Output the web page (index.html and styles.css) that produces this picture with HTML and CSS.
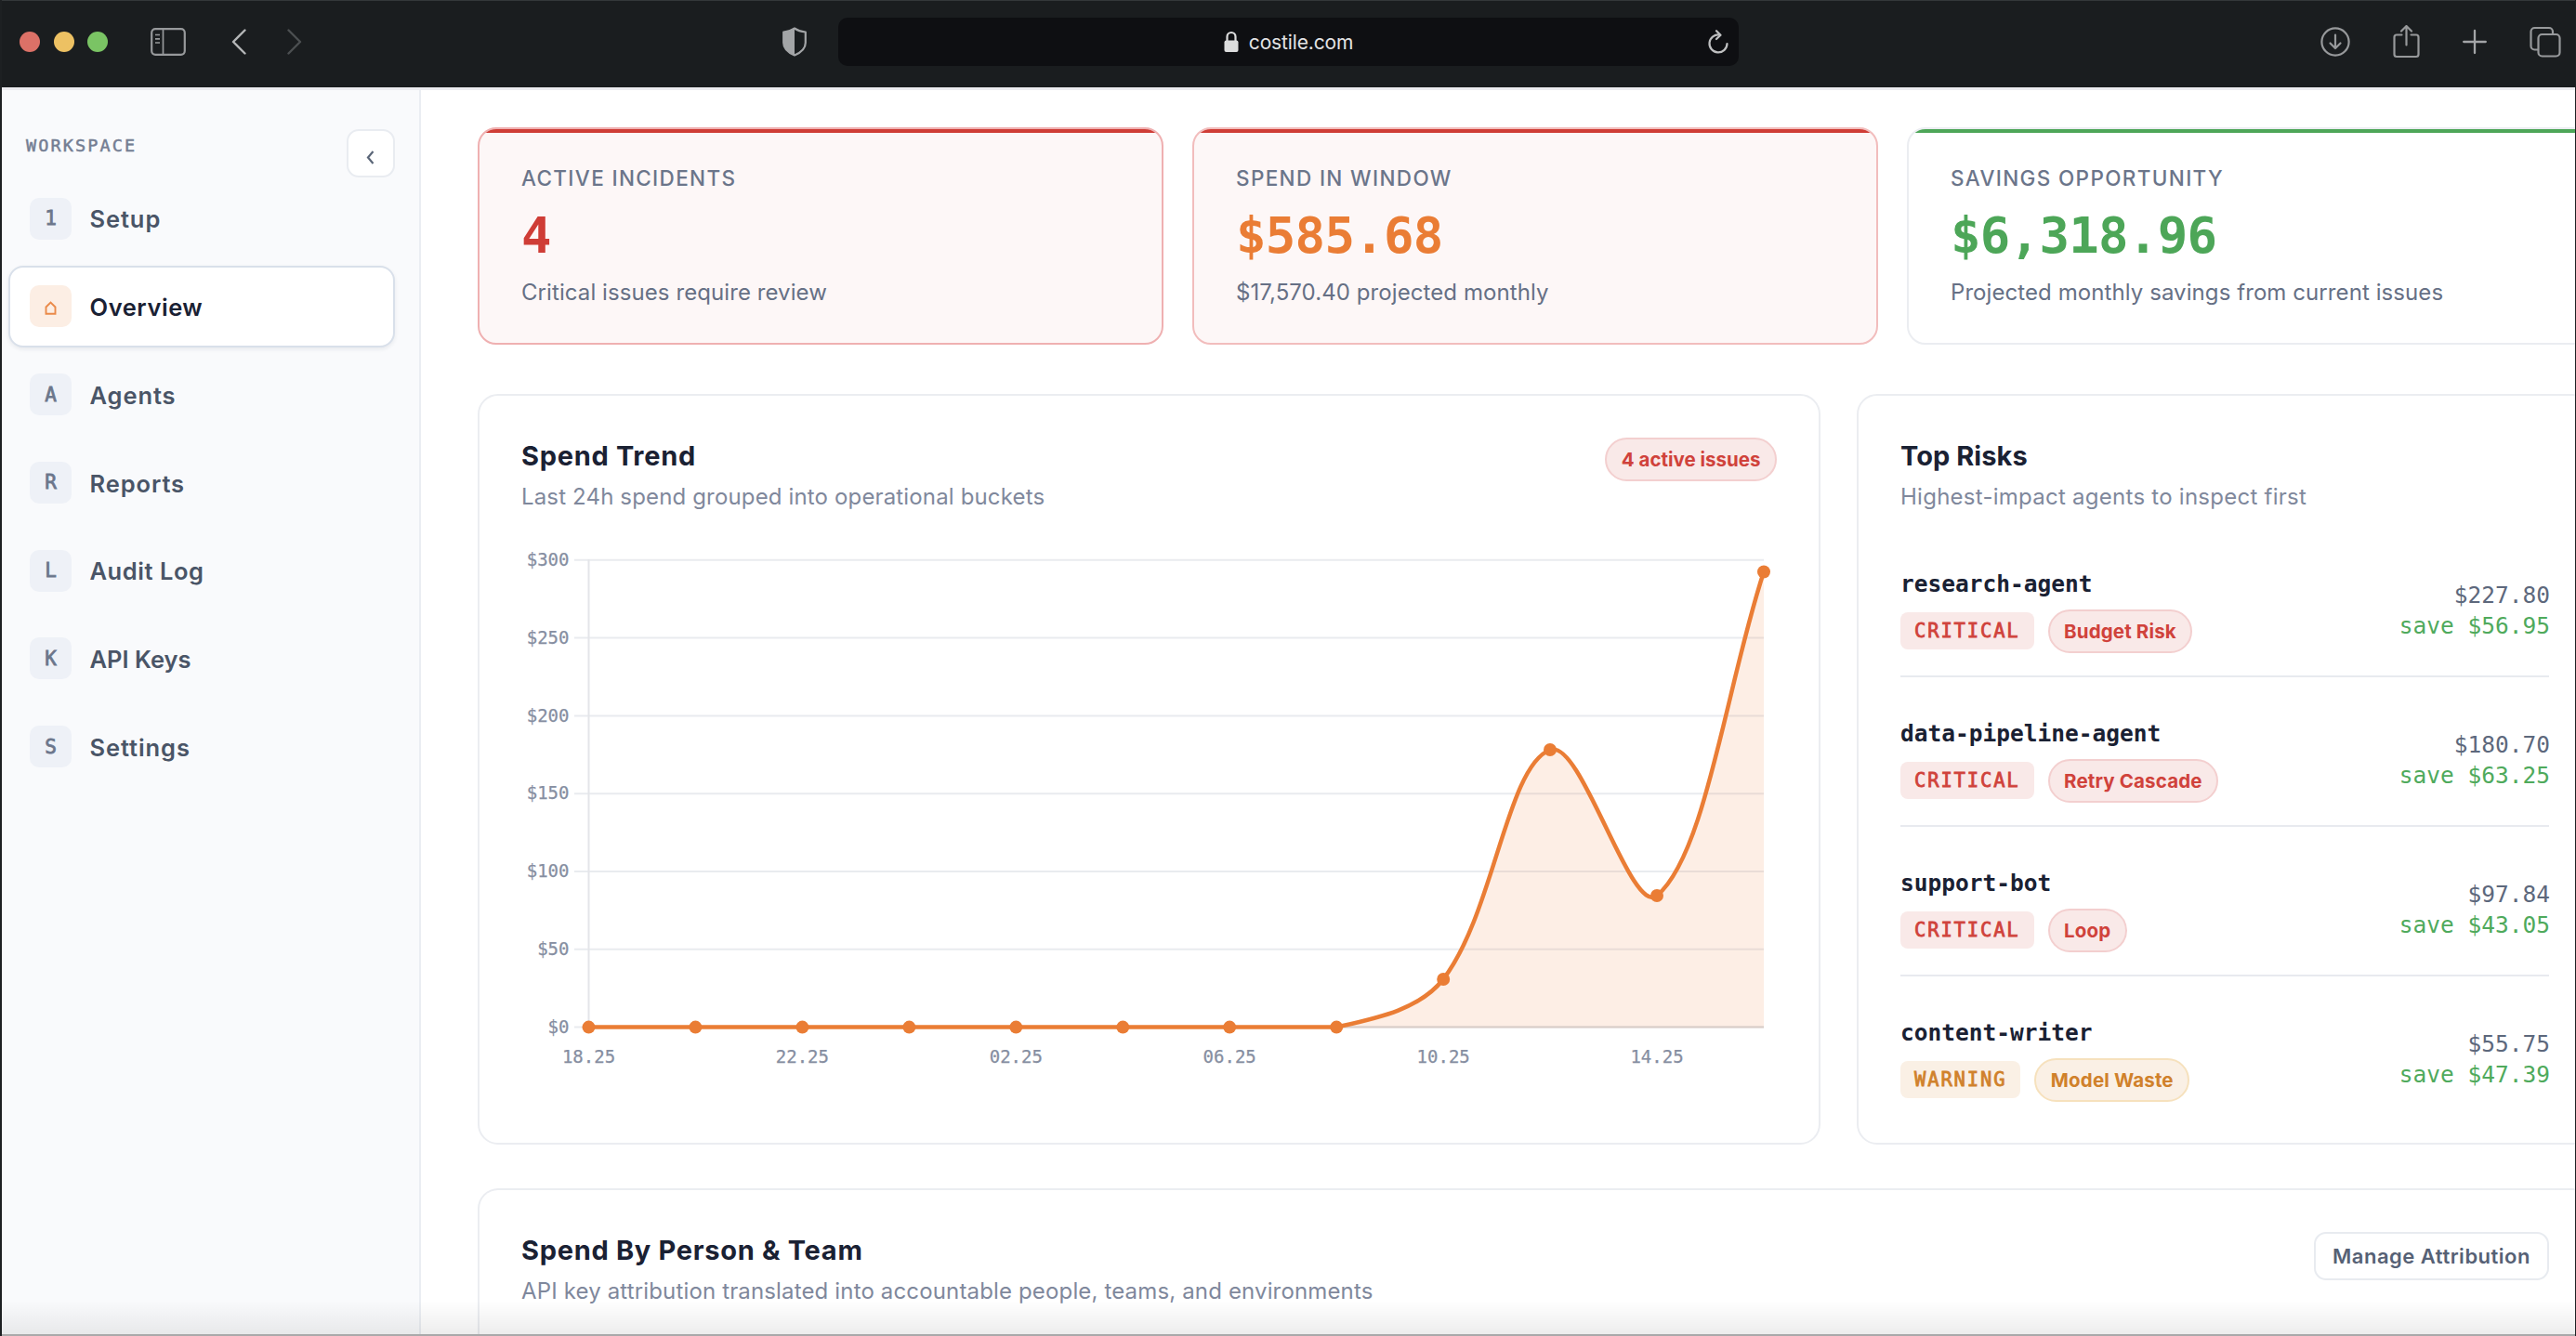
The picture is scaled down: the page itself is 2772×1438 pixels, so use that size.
FILE: index.html
```html
<!DOCTYPE html>
<html lang="en">
<head>
<meta charset="utf-8">
<title>Costile</title>
<link rel="stylesheet" href="styles.css">
</head>
<body>
<div class="window">
  <header class="toolbar">
    <div class="toolbar-left">
      <div class="lights"><i class="light red"></i><i class="light yellow"></i><i class="light green"></i></div>
      <svg class="ico-sidebar" width="38" height="30" viewBox="0 0 38 30" fill="none" stroke="#97999b" stroke-width="2.2"><rect x="1.2" y="1.2" width="35.6" height="27.6" rx="4"/><path d="M13.5 1v28M5 7.500h5M5 11.800h5M5 16h5" stroke-width="1.700"/></svg>
      <svg class="ico-back" width="16" height="28" viewBox="0 0 16 28" fill="none" stroke="#b4b6b7" stroke-width="2.400" stroke-linecap="round" stroke-linejoin="round"><path d="M14.500 1.500 2 14l12.500 12.500"/></svg>
      <svg class="ico-forward" width="16" height="28" viewBox="0 0 16 28" fill="none" stroke="#4c4f51" stroke-width="2.400" stroke-linecap="round" stroke-linejoin="round"><path d="M1.500 1.500 14 14 1.500 26.500"/></svg>
    </div>
    <svg class="ico-shield" width="28" height="32" viewBox="0 0 28 32"><path d="M14 1.500C10.500 4 6.500 5 2.200 5.500V17c0 7 6 11 11.800 13.500C19.800 28 25.800 24 25.800 17V5.500C21.500 5 17.500 4 14 1.500Z" fill="none" stroke="#a3a5a7" stroke-width="2.200" stroke-linejoin="round"/><path d="M14 1.500C10.500 4 6.500 5 2.200 5.500V17c0 7 6 11 11.800 13.500Z" fill="#a3a5a7"/></svg>
    <div class="address">
      <div class="address-text">
        <svg width="16" height="24" viewBox="0 0 16 24"><rect x="0.500" y="10.500" width="15" height="12.500" rx="2" fill="#dcdddd"/><path d="M3.500 11V6.500a4.500 4.500 0 0 1 9 0V11" fill="none" stroke="#dcdddd" stroke-width="2.200"/></svg>
        <span class="url">costile.com</span>
      </div>
      <svg class="ico-reload" width="24" height="26" viewBox="0 0 24 26" fill="none" stroke="#bfc0c1" stroke-width="2.200" stroke-linecap="round" stroke-linejoin="round"><path d="M13.500 5.500A9.500 9.500 0 1 0 21.500 15"/><path d="M10 1.200l4.500 4.500L10 10"/></svg>
    </div>
    <div class="toolbar-right">
      <svg width="32" height="36" viewBox="0 0 32 36" fill="none" stroke="#97999b" stroke-width="2.200" stroke-linecap="round" stroke-linejoin="round"><circle cx="16" cy="18" r="14.600"/><path d="M16 10.500v14M10.500 19.500l5.500 5.500 5.500-5.500"/></svg>
      <svg width="29" height="36" viewBox="0 0 29 36" fill="none" stroke="#97999b" stroke-width="2.200" stroke-linecap="round" stroke-linejoin="round"><path d="M9.500 10.500H4a2.500 2.500 0 0 0-2.500 2.500v18.500A2.500 2.500 0 0 0 4 34h21a2.500 2.500 0 0 0 2.500-2.500V13a2.500 2.500 0 0 0-2.500-2.500h-5.500M14.500 21.500V1.500M9 6.500l5.500-5.500L20 6.500"/></svg>
      <svg width="26" height="36" viewBox="0 0 26 36" fill="none" stroke="#a3a5a7" stroke-width="2.300" stroke-linecap="round"><path d="M13 6v24M1.200 18h23.600"/></svg>
      <svg width="34" height="36" viewBox="0 0 34 36" fill="none" stroke="#97999b" stroke-width="2.200" stroke-linejoin="round"><rect x="9.500" y="10" width="23" height="23.500" rx="4"/><path d="M9.500 26.500H5.500a4 4 0 0 1-4-4V7a4 4 0 0 1 4-4H21a4 4 0 0 1 4 4v3"/></svg>
    </div>
  </header>
  <div class="app">
    <aside class="sidebar">
      <div class="side-head"><span class="side-title">WORKSPACE</span><button class="collapse"><svg width="9" height="15" viewBox="0 0 9 15" fill="none" stroke="#5b6678" stroke-width="2.200"><path d="M7.500 1 2 7.500 7.500 14"/></svg></button></div>
      <nav class="nav">
        <a class="nav-item"><span class="nav-icon">1</span><span class="nav-label loose">Setup</span></a>
        <a class="nav-item active"><span class="nav-icon"><svg width="13" height="15" viewBox="0 0 13 15" fill="none" stroke="#ea8a4a" stroke-width="1.900"><path d="M1.500 13.800V6.500l5-5 5 5v7.300Z"/></svg></span><span class="nav-label">Overview</span></a>
        <a class="nav-item"><span class="nav-icon">A</span><span class="nav-label loose">Agents</span></a>
        <a class="nav-item"><span class="nav-icon">R</span><span class="nav-label loose">Reports</span></a>
        <a class="nav-item"><span class="nav-icon">L</span><span class="nav-label">Audit Log</span></a>
        <a class="nav-item"><span class="nav-icon">K</span><span class="nav-label snug">API Keys</span></a>
        <a class="nav-item"><span class="nav-icon">S</span><span class="nav-label loose">Settings</span></a>
      </nav>
    </aside>
    <main class="main">
      <section class="stats">
        <article class="stat stat-danger"><div class="stat-label">ACTIVE INCIDENTS</div><div class="stat-value">4</div><div class="stat-note">Critical issues require review</div></article>
        <article class="stat stat-warn"><div class="stat-label">SPEND IN WINDOW</div><div class="stat-value">$585.68</div><div class="stat-note">$17,570.40 projected monthly</div></article>
        <article class="stat stat-good"><div class="stat-label">SAVINGS OPPORTUNITY</div><div class="stat-value">$6,318.96</div><div class="stat-note">Projected monthly savings from current issues</div></article>
      </section>
      <section class="panels">
        <article class="panel">
          <div class="panel-head">
            <div><h2>Spend Trend</h2><p>Last 24h spend grouped into operational buckets</p></div>
            <span class="pill pill-red">4 active issues</span>
          </div>
          <svg class="chart" width="1350" height="620" viewBox="561 552 1350 620">
            <g stroke="#e9ebef" stroke-width="2"><path d="M618 602.800H1898M618 686.600H1898M618 770.400H1898M618 854.200H1898M618 938H1898M618 1021.800H1898M618 1105.600H1898"/><path d="M633.500 602V1106" stroke="#e4e5e9"/></g>
            <path d="M1438 1105.600C1480 1096.200 1527.500 1087 1553 1054C1608 982.500 1621 825.400 1668 807C1701.500 793.900 1755 987.200 1783 964C1835.600 920.200 1857.800 737.500 1898 615.500V1105.600Z" fill="#ec7d33" fill-opacity=".13"/>
            <path d="M1438 1105.600H1898" stroke="#d9cdc7" stroke-width="2"/>
            <path d="M633.500 1105.600H1438C1480 1096.200 1527.500 1087 1553 1054C1608 982.500 1621 825.400 1668 807C1701.500 793.900 1755 987.200 1783 964C1835.600 920.200 1857.800 737.500 1898 615.500" fill="none" stroke="#ea7d35" stroke-width="4.500" stroke-linejoin="round"/>
            <g fill="#ea7d35"><circle cx="633.500" cy="1105.600" r="7"/><circle cx="748.400" cy="1105.600" r="7"/><circle cx="863.400" cy="1105.600" r="7"/><circle cx="978.400" cy="1105.600" r="7"/><circle cx="1093.300" cy="1105.600" r="7"/><circle cx="1208.300" cy="1105.600" r="7"/><circle cx="1323.200" cy="1105.600" r="7"/><circle cx="1438.200" cy="1105.600" r="7"/><circle cx="1553.200" cy="1054" r="7"/><circle cx="1668" cy="807" r="7"/><circle cx="1783" cy="964" r="7"/><circle cx="1898" cy="615.500" r="7"/></g>
            <g class="axis" text-anchor="end"><text x="612.500" y="609">$300</text><text x="612.500" y="692.800">$250</text><text x="612.500" y="776.600">$200</text><text x="612.500" y="860.400">$150</text><text x="612.500" y="944.200">$100</text><text x="612.500" y="1028">$50</text><text x="612.500" y="1111.800">$0</text></g>
            <g class="axis" text-anchor="middle"><text x="633.500" y="1144">18.25</text><text x="863.400" y="1144">22.25</text><text x="1093.300" y="1144">02.25</text><text x="1323.200" y="1144">06.25</text><text x="1553.200" y="1144">10.25</text><text x="1783" y="1144">14.25</text></g>
          </svg>
        </article>
        <article class="panel top-risks">
          <div class="panel-head"><div><h2>Top Risks</h2><p>Highest-impact agents to inspect first</p></div></div>
          <ul class="risks">
            <li class="risk"><div><div class="risk-name">research-agent</div><div class="tags"><span class="tag tag-red">CRITICAL</span><span class="pill pill-red">Budget Risk</span></div></div><div class="cost">$227.80<span class="save">save $56.95</span></div></li>
            <li class="risk"><div><div class="risk-name">data-pipeline-agent</div><div class="tags"><span class="tag tag-red">CRITICAL</span><span class="pill pill-red">Retry Cascade</span></div></div><div class="cost">$180.70<span class="save">save $63.25</span></div></li>
            <li class="risk"><div><div class="risk-name">support-bot</div><div class="tags"><span class="tag tag-red">CRITICAL</span><span class="pill pill-red">Loop</span></div></div><div class="cost">$97.84<span class="save">save $43.05</span></div></li>
            <li class="risk"><div><div class="risk-name">content-writer</div><div class="tags"><span class="tag tag-amber">WARNING</span><span class="pill pill-amber">Model Waste</span></div></div><div class="cost">$55.75<span class="save">save $47.39</span></div></li>
          </ul>
        </article>
      </section>
      <section class="panel people">
        <div class="panel-head"><div><h2>Spend By Person &amp; Team</h2><p>API key attribution translated into accountable people, teams, and environments</p></div><button class="manage">Manage Attribution</button></div>
      </section>
    </main>
  </div>
  <div class="bottom-shade"></div>
</div>
</body>
</html>
```
FILE: styles.css
```css
* { box-sizing: border-box; }
body { margin: 0; overflow: hidden; background: #fff; font-family: Inter, "Liberation Sans", sans-serif; }
h2, p, ul { margin: 0; padding: 0; }
button { font: inherit; padding: 0; }

.window { position: relative; width: 2772px; height: 1438px; overflow: hidden; display: flex; flex-direction: column; border-left: 2px solid #1d2022; border-right: 1px solid #1d2022; }

.toolbar { height: 94px; flex: none; display: flex; align-items: center; background: #1a1d1f; border-top: 1px solid #34383a; padding: 0 15px 6px 19px; }
.toolbar-left { display: flex; align-items: center; width: 821px; }
.lights { display: flex; gap: 14.500px; margin-right: 46px; }
.light { width: 22px; height: 22px; border-radius: 50%; }
.red { background: #dc7167; }
.yellow { background: #edc163; }
.green { background: #7ac464; }
.ico-sidebar { margin-right: 49px; }
.ico-back { margin-right: 44px; }
.ico-shield { margin: 0 33px 0 -1px; }
.address { width: 969px; height: 52px; border-radius: 10px; background: #0e0f12; display: flex; align-items: center; justify-content: flex-end; padding-right: 10px; margin-top: 1px; }
.address-text { flex: 1; display: flex; justify-content: center; align-items: center; gap: 11px; padding-left: 34px; color: #e3e3e4; font-size: 21px; letter-spacing: -.15px; }
.toolbar-right { margin-left: auto; display: flex; align-items: center; gap: 46px; }

.app { flex: 1; display: flex; min-height: 0; border-top: 3px solid #ececf0; }
.sidebar { width: 451px; flex: none; background: #f9fafc; border-right: 2px solid #eaedf2; padding: 42px 26.500px 0 7px; }
.side-head { display: flex; justify-content: space-between; align-items: flex-start; height: 52px; padding-left: 19px; }
.side-title { font: 400 18.500px/28px "DejaVu Sans Mono", monospace; letter-spacing: 2.100px; color: #747e93; margin-top: 4px; -webkit-text-stroke: .5px; }
.collapse { width: 52px; height: 52px; border: 2px solid #e9ecf1; border-radius: 13px; background: #fff; display: flex; align-items: center; justify-content: center; padding-top: 9px; }
.nav { display: flex; flex-direction: column; gap: 6.800px; }
.nav-item { height: 88px; display: flex; align-items: center; gap: 20px; padding-left: 21px; border: 2px solid transparent; border-radius: 16px; color: #4a5567; font-weight: 620; font-size: 25.500px; letter-spacing: .55px; }
.nav-label { padding-top: 1.500px; margin-left: -.5px; }
.loose { letter-spacing: .9px; }
.snug { letter-spacing: 0; }
.nav-item.active { background: #fff; border-color: #d9e0ea; color: #1a2133; box-shadow: 0 2px 4px rgba(30, 41, 59, .08); }
.nav-icon { width: 45px; height: 45px; border-radius: 10px; background: #eef1f7; color: #6b768b; display: flex; align-items: center; justify-content: center; font: 400 21px "DejaVu Sans Mono", monospace; letter-spacing: 0; -webkit-text-stroke: .8px; }
.active .nav-icon { background: #fceee4; padding-top: 4px; }

.main { width: 2337px; flex: none; padding: 40px 0 0 61px; }
.stats { display: grid; grid-template-columns: repeat(3, 738px); gap: 31px; }
.stat { position: relative; height: 234px; border: 2px solid #ebedf1; border-radius: 20px; padding: 38.500px 45px 0; overflow: hidden; background: #fff; }
.stat::before { content: ""; position: absolute; inset: -2px -2px auto; height: 6px; background: #4da658; }
.stat-danger, .stat-warn { background: #fdf7f7; border-color: #f2bdbd; }
.stat-danger { border-color: #efb0b1; }
.stat-danger::before, .stat-warn::before { background: #cf3d36; }
.stat-label { font-size: 22.500px; line-height: 28px; font-weight: 500; letter-spacing: 1.350px; color: #6b758a; }
.stat-value { font: 700 54px/64px "DejaVu Sans Mono", monospace; letter-spacing: -.7px; margin-top: 16px; color: #cf3d36; }
.stat-warn .stat-value { color: #ea7d35; }
.stat-good .stat-value { color: #4da658; }
.stat-note { font-size: 24px; line-height: 34px; letter-spacing: .08px; margin-top: 12px; color: #667085; }

.panels { display: grid; grid-template-columns: 1445px 792px; gap: 39px; margin-top: 53px; }
.panel { border: 2px solid #ebedf1; border-radius: 22px; padding: 46px 45px 0; height: 807.500px; }
.panel-head { display: flex; justify-content: space-between; align-items: flex-start; height: 80px; }
h2 { font-size: 29px; line-height: 38px; font-weight: 650; letter-spacing: .7px; color: #1a2133; }
.panel-head p { font-size: 24px; line-height: 34px; letter-spacing: .15px; margin-top: 8px; color: #7f889c; }
.top-risks h2 { letter-spacing: .05px; }
.top-risks .panel-head p { letter-spacing: .26px; }
.pill { height: 47px; border: 2px solid #f3cfcf; border-radius: 24px; padding: 0 15.500px; display: inline-flex; align-items: center; font-size: 20.500px; font-weight: 700; letter-spacing: .15px; background: #f9e9e8; color: #d0423b; }
.panel-head .pill { letter-spacing: 0; margin-top: -1px; }
.pill-amber { background: #faf0e5; border-color: #f6e1bd; color: #d0812b; }
.chart { display: block; }
.axis { font: 400 19px "DejaVu Sans Mono", monospace; fill: #868ea1; stroke: #868ea1; stroke-width: .25px; }

.risks { list-style: none; margin-top: 16px; }
.risk { height: 161px; display: flex; justify-content: space-between; padding: 44.500px 0 0; border-bottom: 2px solid #e8eaef; }
.risk:last-child { border-bottom: 0; }
.risk-name { font: 700 24.500px/32px "DejaVu Sans Mono", monospace; color: #1a2133; }
.tags { display: flex; align-items: center; gap: 15px; margin-top: 11px; }
.tag { height: 40px; border-radius: 8px; padding: 0 15px; font: 400 20.500px/40px "DejaVu Sans Mono", monospace; letter-spacing: 1.850px; -webkit-text-stroke: .8px; }
.tag-red { background: #f9e9e8; color: #d0423b; }
.tag-amber { background: #faf0e5; color: #d0812b; }
.cost { font: 400 24.500px/33px "DejaVu Sans Mono", monospace; color: #5d687c; text-align: right; padding-top: 11.500px; margin-right: -1px; }
.save { display: block; color: #4faa5c; }

.people { margin-top: 47.500px; height: 240px; border-bottom: 0; }
.manage { height: 52px; width: 253px; margin-top: -1px; border: 2px solid #e8ebf0; border-radius: 13px; background: #fff; color: #566175; font-size: 22px; font-weight: 600; letter-spacing: .5px; }
.bottom-shade { position: absolute; inset: auto 0 0; height: 38px; background: linear-gradient(rgba(0,0,0,0), rgba(0,0,0,.07)); border-bottom: 2px solid #a9a9aa; }
```
